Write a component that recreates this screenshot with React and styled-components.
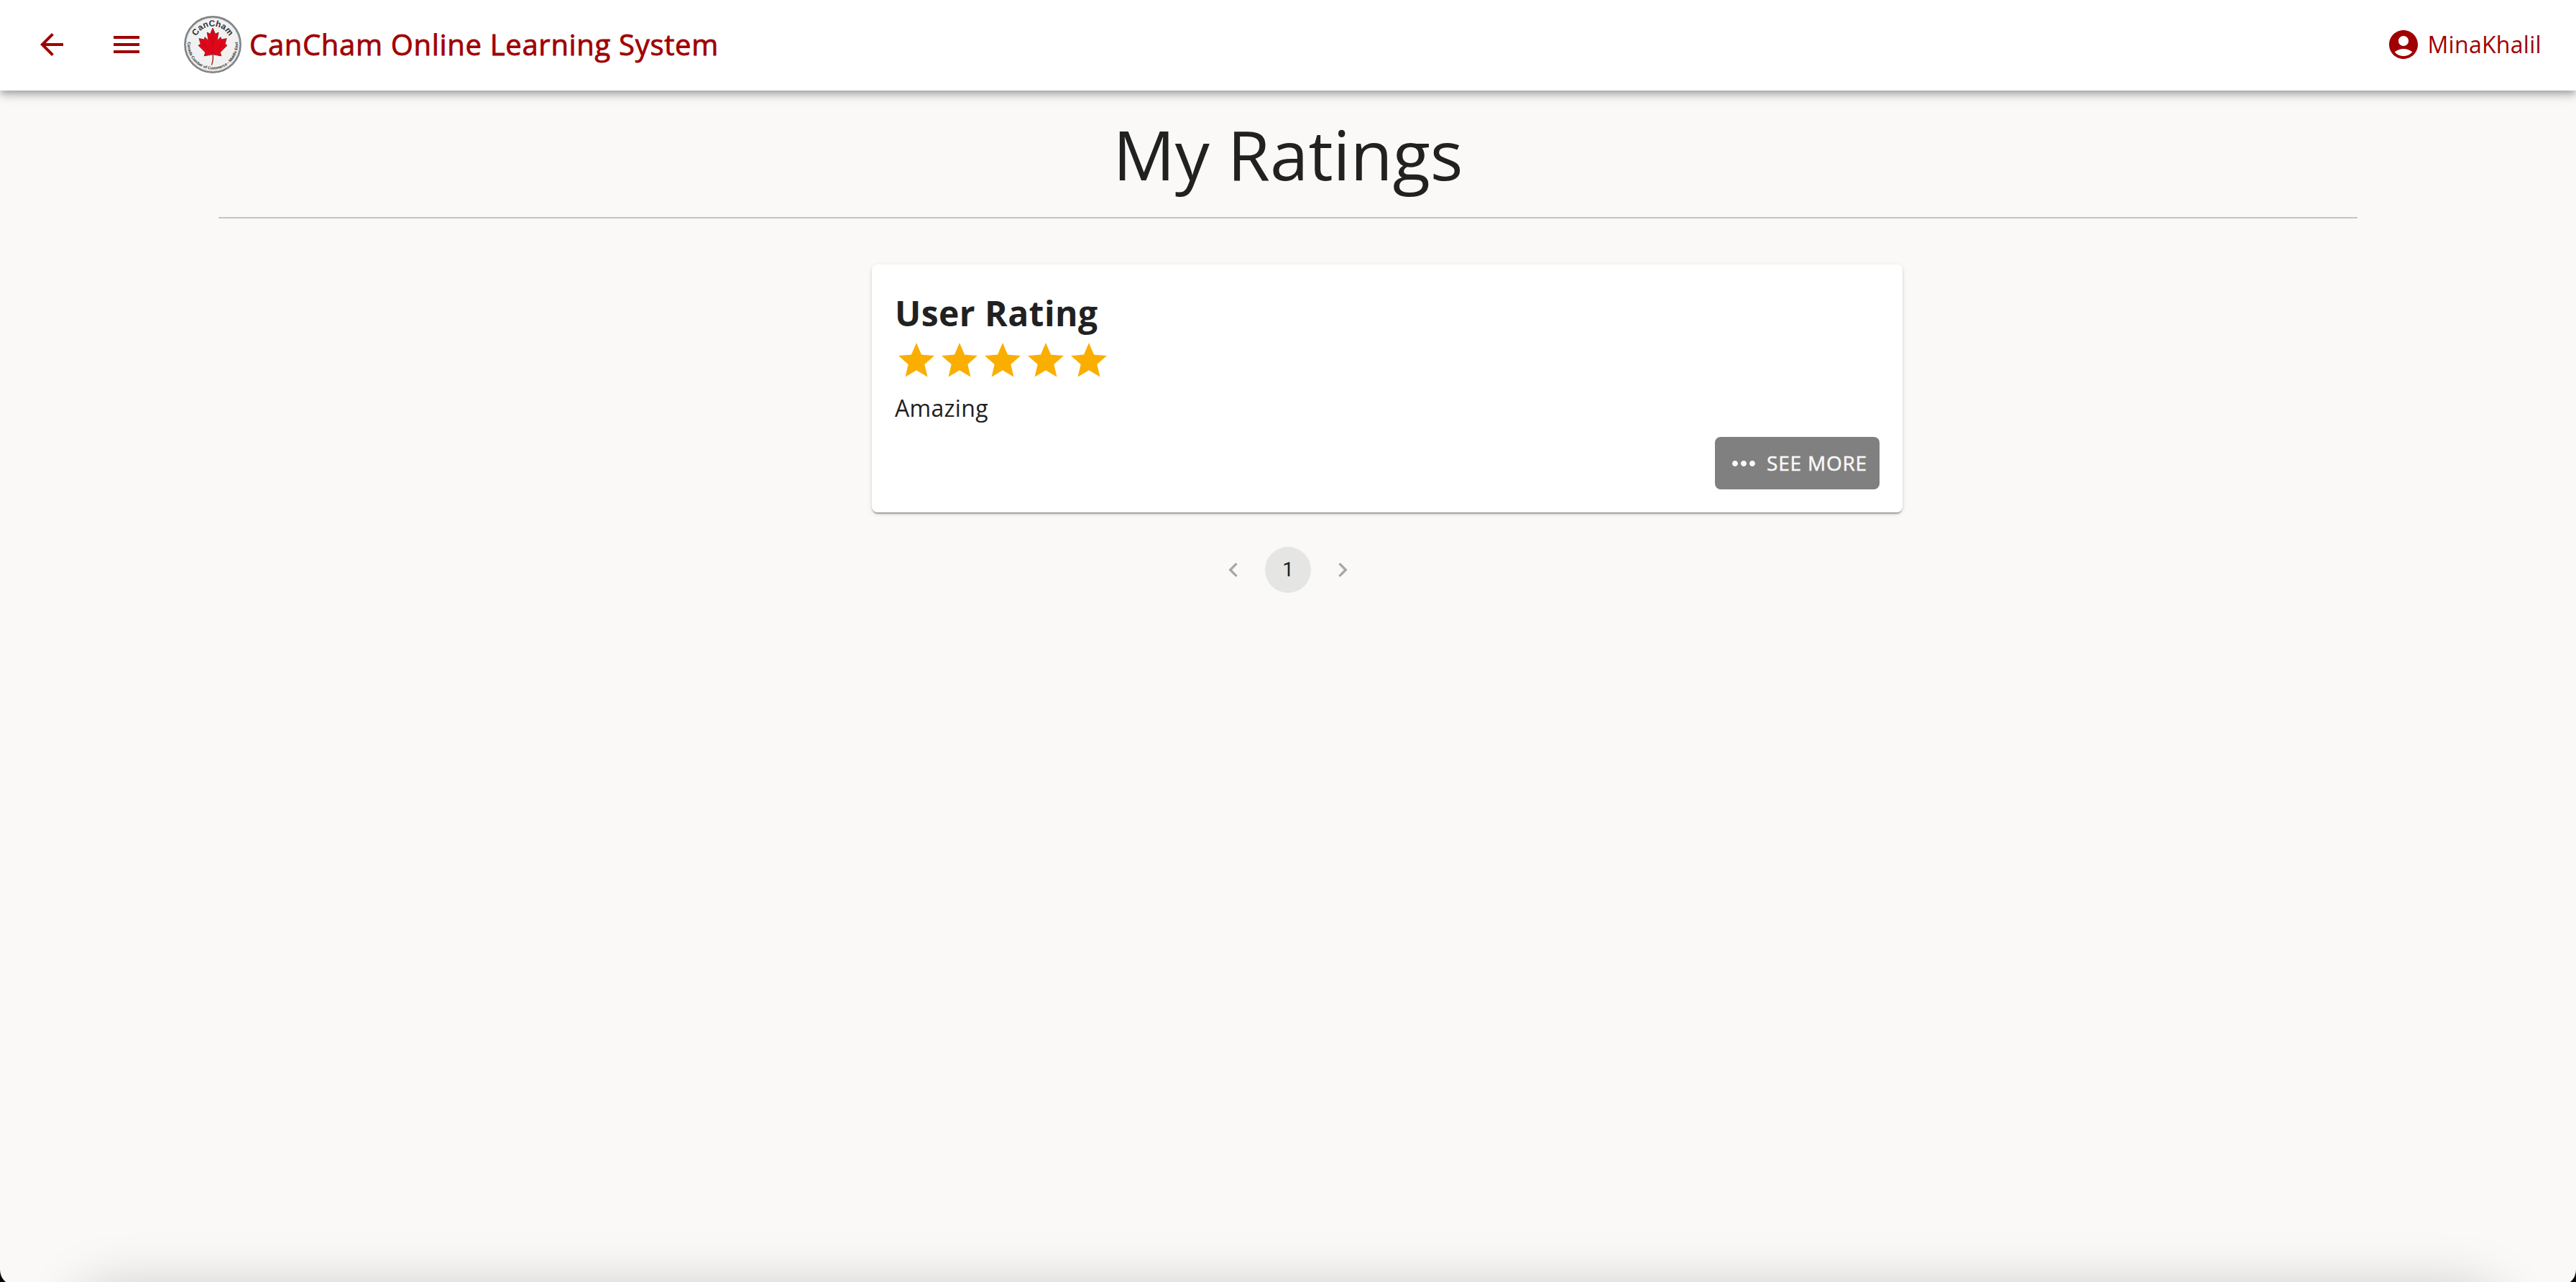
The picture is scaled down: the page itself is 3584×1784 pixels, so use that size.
import React from "react";
import styled, { createGlobalStyle } from "styled-components";

const GlobalStyle = createGlobalStyle`
  html, body { margin: 0; padding: 0; background: #05060a; }
  *, *::before, *::after { box-sizing: border-box; }
  body { font-family: "Open Sans", "Noto Sans", sans-serif; color: #212121; }
`;

const Screen = styled.div`
  height: 1784px;
  overflow: hidden;
`;

const Page = styled.div`
  position: relative;
  height: 1789px;
  display: flex;
  flex-direction: column;
  background: #faf9f7;
  border-radius: 0 0 22px 22px;
  overflow: hidden;
`;

const DockShadow = styled.div`
  position: absolute;
  left: 110px;
  right: 110px;
  top: 1796px;
  height: 100px;
  border-radius: 40px;
  box-shadow: 0 0 80px rgba(0, 0, 0, 0.22);
`;

const AppBar = styled.header`
  flex: none;
  height: 126px;
  padding: 0 48px 2px;
  display: flex;
  align-items: center;
  background: #fff;
  color: #a00003;
  box-shadow: 0 4px 8px -2px rgba(0, 0, 0, 0.2), 0 8px 10px rgba(0, 0, 0, 0.14),
    0 2px 20px rgba(0, 0, 0, 0.12);
`;

const Nav = styled.div`
  display: flex;
  gap: 56px;
  align-items: center;
`;

const Brand = styled.div`
  display: flex;
  align-items: center;
  gap: 11px;
  font-size: 40px;
  font-weight: 500;
  line-height: 64px;
  letter-spacing: 0.68px;
  -webkit-text-stroke: 0.8px currentColor;
`;

const Account = styled.div`
  margin-left: auto;
  display: flex;
  align-items: center;
  gap: 10px;
  font-size: 32px;
  line-height: 48px;
  letter-spacing: 0.3px;
`;

const Glyph = styled.svg`
  display: block;
  flex: none;
  width: ${(p) => p.$size}px;
  height: ${(p) => p.$size}px;
  fill: currentColor;
  -webkit-text-stroke: 0;
  letter-spacing: 0;
`;

const Main = styled.main`
  padding: 30px 304px 0;
  display: flex;
  flex-direction: column;
  align-items: center;
`;

const Title = styled.h1`
  margin: 0;
  align-self: stretch;
  height: 148px;
  text-align: center;
  font-size: 96px;
  font-weight: 400;
  line-height: 116px;
  border-bottom: 2px solid #c5c4c3;
`;

const Card = styled.section`
  width: 1434px;
  height: 345px;
  margin: 64px 0 0 276px;
  padding: 32px;
  display: flex;
  flex-direction: column;
  background: #fff;
  border-radius: 8px;
  box-shadow: 0 4px 2px -2px rgba(0, 0, 0, 0.2), 0 2px 2px rgba(0, 0, 0, 0.14),
    0 2px 6px rgba(0, 0, 0, 0.12);
`;

const CardTitle = styled.h2`
  margin: 0;
  height: 72px;
  font-size: 48px;
  font-weight: 700;
  line-height: 72px;
  letter-spacing: 0.45px;
`;

const Stars = styled.div`
  display: flex;
  color: #faaf00;
`;

const Comment = styled.p`
  margin: 12px 0 0;
  font-size: 32px;
  line-height: 48px;
  letter-spacing: 0.3px;
`;

const MoreButton = styled.button`
  margin: auto 0 0;
  align-self: flex-end;
  width: 229px;
  height: 73px;
  padding: 0 16px;
  display: flex;
  align-items: center;
  gap: 8px;
  border: 0;
  border-radius: 8px;
  background: #808080;
  color: #faf9f7;
  font: 500 28px/49px "Open Sans", "Noto Sans", sans-serif;
  letter-spacing: 0.8px;
  white-space: nowrap;
  -webkit-text-stroke: 0.5px currentColor;
`;

const Pagination = styled.nav`
  margin-top: 48px;
  display: flex;
  gap: 12px;
`;

const PageItem = styled.div`
  width: 64px;
  height: 64px;
  border-radius: 50%;
  display: flex;
  align-items: center;
  justify-content: center;
  font: 400 28px/40px Roboto, sans-serif;
  background: ${(p) => (p.$selected ? "#e5e5e4" : "transparent")};
  color: ${(p) => (p.$disabled ? "#a7a6a5" : "#212121")};
`;

const Icon = ({ d, size = 48 }) => (
  <Glyph $size={size} viewBox="0 0 24 24">
    <path d={d} />
  </Glyph>
);

const icons = {
  back: "M20 11H7.83l5.59-5.59L12 4l-8 8 8 8 1.41-1.41L7.83 13H20v-2z",
  menu: "M3 18h18v-2H3v2zm0-5h18v-2H3v2zm0-7v2h18V6H3z",
  account:
    "M12 2C6.48 2 2 6.48 2 12s4.48 10 10 10 10-4.48 10-10S17.52 2 12 2zm0 4c1.93 0 3.5 1.57 3.5 3.5S13.93 13 12 13s-3.5-1.57-3.5-3.5S10.07 6 12 6zm0 14c-2.03 0-4.43-.82-6.14-2.88C7.55 15.8 9.68 15 12 15s4.45.8 6.14 2.12C16.43 19.18 14.03 20 12 20z",
  star: "M12 17.27 18.18 21l-1.64-7.03L22 9.24l-7.19-.61L12 2 9.19 8.63 2 9.24l5.46 4.73L5.82 21z",
  more: "M6 10c-1.1 0-2 .9-2 2s.9 2 2 2 2-.9 2-2-.9-2-2-2zm12 0c-1.1 0-2 .9-2 2s.9 2 2 2 2-.9 2-2-.9-2-2-2zm-6 0c-1.1 0-2 .9-2 2s.9 2 2 2 2-.9 2-2-.9-2-2-2z",
  prev: "M15.41 7.41 14 6l-6 6 6 6 1.41-1.41L10.83 12z",
  next: "M10 6 8.59 7.41 13.17 12l-4.58 4.59L10 18l6-6z",
};

const Logo = () => (
  <Glyph $size={80} viewBox="0 0 80 80">
    <defs>
      <path id="arc-top" d="M14.5 40A25.5 25.5 0 0 1 65.5 40" />
      <path id="arc-bottom" d="M5.5 34.5A34.9 34.9 0 1 0 74.5 34.5" />
    </defs>
    <circle cx="40" cy="40" r="38.6" fill="#f1f1f1" stroke="#7f8183" strokeWidth="2.6" />
    <circle cx="40" cy="40" r="37" fill="none" stroke="#c9cacb" strokeWidth="0.8" />
    <g transform="translate(0 -2.2) scale(1 1.13)">
      <path
        d="M40 17 36.4 24.4 32.2 22.3 34 32.4 29 28.2 28.2 31.2 21 29.9 23.2 36.6 20 38.4 29.6 47 28.2 51.4 39.2 49.6 40.6 49.6 51.8 51.4 50.4 47 60 38.4 57 36.6 59.2 29.9 52 31.2 51 28.2 46 32.4 48 22.3 43.6 24.4z"
        fill="#e3061a"
        stroke="#8d1a20"
        strokeWidth="0.8"
      />
      <path
        d="M40 20v30M40 49 25 37M40 49 55 37M40 36l-5-9M40 36l5-9M31 42l-5-9M49 42l5-9"
        fill="none"
        stroke="#a30f18"
        strokeWidth="0.7"
      />
    </g>
    <path d="M40 52c.8 6 .6 11-1.6 16.5" fill="none" stroke="#a5202a" strokeWidth="1.4" />
    <text fill="#333" fontFamily="Liberation Sans, sans-serif" fontSize="12" fontWeight="700">
      <textPath href="#arc-top" startOffset="50%" textAnchor="middle">
        CanCham
      </textPath>
    </text>
    <text fill="#333" fontFamily="Liberation Sans, sans-serif" fontSize="5.6" fontWeight="700">
      <textPath href="#arc-bottom" startOffset="50%" textAnchor="middle">
        Canada Camber of Commerce - Middle East
      </textPath>
    </text>
  </Glyph>
);

export default function App() {
  return (
    <Screen>
      <GlobalStyle />
      <Page>
        <AppBar>
          <Nav>
            <Icon d={icons.back} />
            <Icon d={icons.menu} />
            <Brand>
              <Logo />
              CanCham Online Learning System
            </Brand>
          </Nav>
          <Account>
            <Icon d={icons.account} />
            MinaKhalil
          </Account>
        </AppBar>
        <Main>
          <Title>My Ratings</Title>
          <Card>
            <CardTitle>User Rating</CardTitle>
            <Stars>
              {[1, 2, 3, 4, 5].map((n) => (
                <Icon key={n} d={icons.star} size={60} />
              ))}
            </Stars>
            <Comment>Amazing</Comment>
            <MoreButton>
              <Icon d={icons.more} />
              SEE MORE
            </MoreButton>
          </Card>
          <Pagination>
            <PageItem $disabled>
              <Icon d={icons.prev} size={40} />
            </PageItem>
            <PageItem $selected>1</PageItem>
            <PageItem $disabled>
              <Icon d={icons.next} size={40} />
            </PageItem>
          </Pagination>
        </Main>
        <DockShadow />
      </Page>
    </Screen>
  );
}
